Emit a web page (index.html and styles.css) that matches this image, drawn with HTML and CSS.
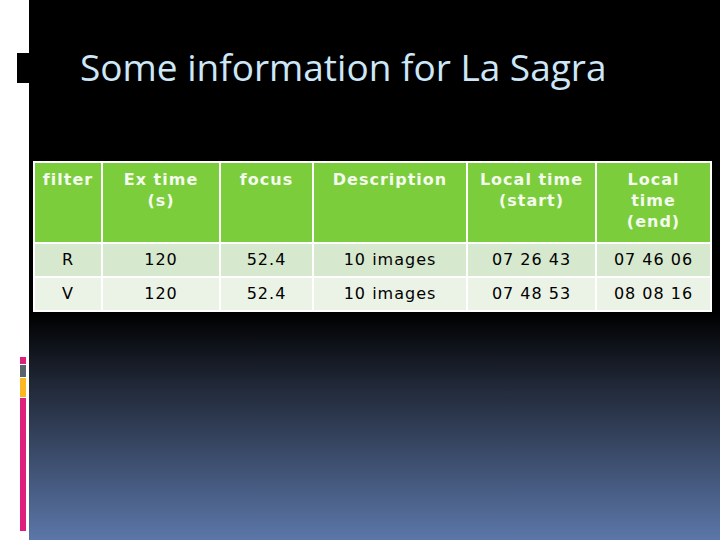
FILE: index.html
```html
<!DOCTYPE html>
<html>
<head>
<meta charset="utf-8">
<link rel="stylesheet" href="styles.css">
</head>
<body>
<div class="page">
  <div class="gutter">
    <div class="mark"></div>
    <div class="bar">
      <div class="seg pink-s"></div>
      <div class="seg gray"></div>
      <div class="seg yellow"></div>
      <div class="seg pink-l"></div>
    </div>
  </div>
  <div class="slide">
    <h1 class="title">Some information for La Sagra</h1>
    <table class="info">
      <colgroup>
        <col class="c1"><col class="c2"><col class="c3"><col class="c4"><col class="c5"><col class="c6">
      </colgroup>
      <thead>
        <tr>
          <th>filter</th>
          <th>Ex time<br>(s)</th>
          <th>focus</th>
          <th>Description</th>
          <th>Local time<br>(start)</th>
          <th>Local<br>time<br>(end)</th>
        </tr>
      </thead>
      <tbody>
        <tr class="odd">
          <td>R</td><td>120</td><td>52.4</td><td>10 images</td><td>07 26 43</td><td>07 46 06</td>
        </tr>
        <tr class="even">
          <td>V</td><td>120</td><td>52.4</td><td>10 images</td><td>07 48 53</td><td>08 08 16</td>
        </tr>
      </tbody>
    </table>
  </div>
</div>
</body>
</html>
```
FILE: styles.css
```css
html, body {
  margin: 0;
  padding: 0;
  background: #ffffff;
}
.page {
  display: flex;
  width: 720px;
  height: 540px;
  overflow: hidden;
}
.gutter {
  width: 29px;
  flex: 0 0 29px;
  display: flex;
  flex-direction: column;
}
.mark {
  margin-top: 53px;
  margin-left: 17px;
  width: 12px;
  height: 30px;
  background: #000;
}
.bar {
  margin-top: 274px;
  margin-left: 20px;
  width: 6px;
  display: flex;
  flex-direction: column;
  gap: 1px;
}
.seg { width: 6px; }
.pink-s { height: 7px; background: #df1f7c; }
.gray { height: 12px; background: #59636b; }
.yellow { height: 19px; background: #fbb823; }
.pink-l { height: 133px; background: #df1f7c; }
.slide {
  flex: 1;
  height: 540px;
  background: linear-gradient(to bottom, #000 0%, #000 58%, #222a3a 72%, #5b76a8 100%);
  font-family: "DejaVu Sans", Verdana, sans-serif;
}
.title {
  margin: 43px 0 0 51px;
  font-family: "Open Sans", sans-serif;
  font-weight: normal;
  font-size: 37px;
  line-height: 48px;
  color: #cde7f8;
}
.info {
  margin: 70px 0 0 4px;
  border-collapse: collapse;
  border: 1px solid #fff;
  table-layout: fixed;
  width: 677px;
  font-size: 16px;
  letter-spacing: 1px;
}
.c1 { width: 68px; }
.c2 { width: 118px; }
.c3 { width: 93px; }
.c4 { width: 154px; }
.c5 { width: 129px; }
.c6 { width: 115px; }
.info th, .info td {
  border: 2px solid #fff;
  text-align: center;
}
.info th {
  background: #7ccd3c;
  color: #f4fbee;
  font-weight: bold;
  vertical-align: top;
  height: 67px;
  padding: 6px 2px 6px;
  line-height: 21px;
}
.info td {
  height: 32px;
  padding: 0 2px;
  color: #000;
  line-height: 20px;
}
.odd td { background: #d6e8cd; }
.even td { background: #ebf3e6; }
```
